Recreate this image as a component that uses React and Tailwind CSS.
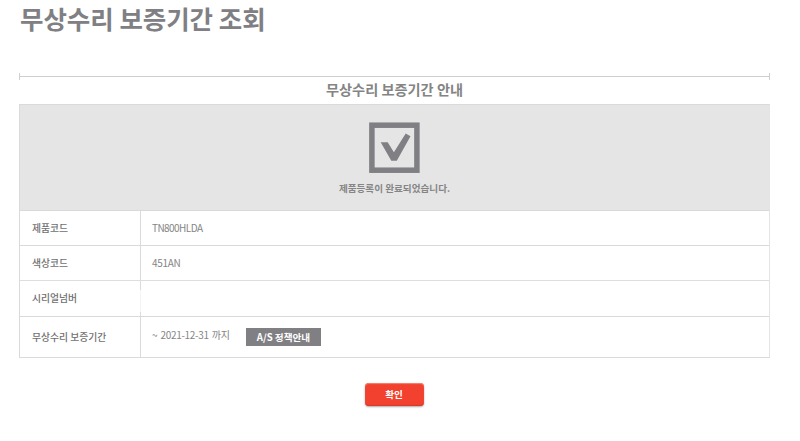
import React from "react";

const Row = ({ label, className, children }) => {
  return (
    <div className={`flex border-t border-[#d9d9d9] ${className}`}>
      <div className="w-[121px] shrink-0 flex items-center pl-3 border-r border-[#dadada] text-[9.8px] font-medium text-[#6f6f6f] whitespace-nowrap">
        {label}
      </div>
      <div className="flex items-center pl-[11px] text-[10px] text-[#858585] whitespace-nowrap">
        {children}
      </div>
    </div>
  );
};

const App = () => {
  return (
    <div className="w-[800px] h-[441px] bg-white pl-[19px] font-['Noto_Sans_CJK_KR',sans-serif]">
      <h1 className="h-[73px] pl-px text-[25.5px] leading-[36px] tracking-[-0.05px] font-bold text-[#808084] whitespace-nowrap">
        무상수리 보증기간 조회
      </h1>

      <div className="w-[751px]">
        <div className="h-[7px] flex items-center border-x border-[#cfcfcf]">
          <div className="h-px w-full bg-[#cfcfcf]" />
        </div>
        <h2 className="h-6 text-center text-[14.2px] leading-[18px] font-bold text-[#848484]">
          무상수리 보증기간 안내
        </h2>

        <div className="border border-[#dadada] border-r-[#e4e4e4]">
          <div className="h-[105px] bg-[#e5e5e5] flex flex-col items-center pt-[17px]">
            <svg width="52" height="52" viewBox="0 0 52 52" fill="none">
              <rect x="2.9" y="3.2" width="45" height="45" stroke="#808084" strokeWidth="5.5" />
              <path d="M11.7 20.3H18.7L24.9 30.2L36.7 11.4L41.5 14.3L27.8 38.7H22.3Z" fill="#808084" />
            </svg>
            <p className="mt-[7px] text-[9.6px] leading-[14px] font-bold text-[#858585]">
              제품등록이 완료되었습니다.
            </p>
          </div>
          <Row label="제품코드" className="h-[35px]">
            <span className="pb-0.5 tracking-[-0.55px]">TN800HLDA</span>
          </Row>
          <Row label="색상코드" className="h-[35px]">
            <span className="pb-0.5 tracking-[-0.3px]">451AN</span>
          </Row>
          {/* divider breaks off beside the empty serial number */}
          <div className="h-[36px] flex border-t border-[#dedede]">
            <div className="w-[120px] flex items-center pl-3 text-[9.8px] font-medium text-[#6f6f6f]">
              시리얼넘버
            </div>
            <div className="w-px flex flex-col justify-between">
              <div className="h-[9px] bg-[#dadada]" />
              <div className="grow bg-[#f4f4f4]" />
              <div className="h-1 bg-[#dadada]" />
            </div>
          </div>
          <Row label="무상수리 보증기간" className="h-[41px]">
            <span className="w-[78px] pb-1.5 tracking-[-0.3px] [word-spacing:1.2px]">~ 2021-12-31 까지</span>
            <button className="ml-4 w-[75px] h-[18px] bg-[#808084] text-white text-[9.6px] leading-[17px] font-bold">
              A/S 정책안내
            </button>
          </Row>
        </div>

        <div className="flex justify-center mt-[25px]">
          <button className="w-[59px] h-[23px] rounded-[4px] bg-[#f2412f] text-white text-[9.6px] leading-[20px] pb-0.5 pr-px font-bold shadow-[inset_0_1px_1px_#f8826f,inset_0_-1px_1px_#d93a2a,0_1px_2px_#aaaaaa]">
            확인
          </button>
        </div>
      </div>
    </div>
  );
};

export default App;
